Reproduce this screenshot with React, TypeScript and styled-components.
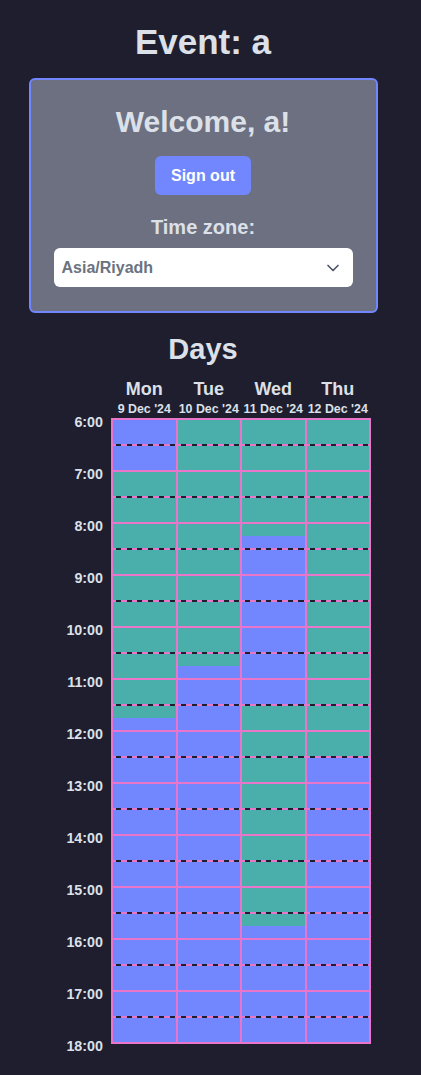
import React from "react";
import styled, {createGlobalStyle} from "styled-components";
import {ChevronDown} from "lucide-react";

const GlobalStyle = createGlobalStyle`
  html, body {
    margin: 0;
    padding: 0;
    background: #1e1e2e;
    overflow: hidden;
  }
  body {
    font-family: "Liberation Sans", Arial, sans-serif;
  }
`

const Page = styled.div`
  width: 406px;
  display: flex;
  flex-direction: column;
  align-items: center;
  padding-top: 22px;
  color: #dce0e8;
`

const Title = styled.h1`
  margin: 0 0 16px;
  font-size: 35px;
  line-height: 40px;
  font-weight: bold;
`

const Card = styled.div`
  width: 349px;
  box-sizing: border-box;
  background: #6c7080;
  border: 2px solid #7287fd;
  border-radius: 6px;
  padding: 24px 23px;
  display: flex;
  flex-direction: column;
  align-items: center;
`

const Welcome = styled.h2`
  margin: 0;
  font-size: 30px;
  line-height: 36px;
  font-weight: bold;
`

const SignOut = styled.button`
  margin-top: 16px;
  background: #7287fd;
  color: #fff;
  border: none;
  border-radius: 6px;
  padding: 10px 16px;
  font-family: inherit;
  font-size: 16px;
  line-height: 19px;
  font-weight: bold;
  cursor: pointer;
`

const TzLabel = styled.label`
  margin-top: 20px;
  font-size: 20px;
  line-height: 24px;
  font-weight: bold;
`

const SelectWrap = styled.div`
  position: relative;
  width: 100%;
  margin-top: 9px;
`

const Select = styled.select`
  appearance: none;
  width: 100%;
  height: 39px;
  border: none;
  border-radius: 6px;
  background: #fff;
  color: #6b7280;
  font-family: inherit;
  font-size: 16px;
  font-weight: bold;
  padding: 0 36px 0 8px;
  outline: none;
`

const Chevron = styled.span`
  position: absolute;
  right: 10px;
  top: 50%;
  transform: translateY(-50%);
  display: flex;
  color: #4b5563;
  pointer-events: none;
`

const DaysTitle = styled.h2`
  margin: 19px 0 0;
  font-size: 29px;
  line-height: 34px;
  font-weight: bold;
`

const Schedule = styled.div`
  margin-top: 13px;
  display: flex;
  align-items: flex-start;
  gap: 8px;
`

const TimeCol = styled.div`
  width: 68px;
  padding-top: 17px;
`

const TimeLabel = styled.div`
  height: 52px;
  line-height: 52px;
  text-align: right;
  font-size: 14.3px;
  font-weight: bold;
`

const DaysArea = styled.div`
  width: 260px;
`

const Header = styled.div`
  display: grid;
  grid-template-columns: repeat(4, 1fr);
  column-gap: 2px;
  padding: 0 2px;
`

const DayHead = styled.div`
  display: flex;
  flex-direction: column;
  align-items: center;
`

const DayName = styled.div`
  font-size: 18px;
  line-height: 20px;
  font-weight: bold;
`

const DayDate = styled.div`
  margin-top: 3px;
  font-size: 12.4px;
  line-height: 14px;
  font-weight: bold;
  white-space: nowrap;
`

const Grid = styled.div`
  margin-top: 2px;
  display: grid;
  grid-template-columns: repeat(4, 1fr);
  column-gap: 2px;
  padding: 2px;
  background: #ea76cb;
`

const Column = styled.div`
  display: flex;
  flex-direction: column;
  gap: 2px;
`

const Hour = styled.div`
  display: flex;
  flex-direction: column;
`

const Half = styled.div`
  display: flex;
  flex-direction: column;
  height: 24px;
`

const Quarter = styled.div<{ $on: boolean }>`
  height: 12px;
  background: ${p => (p.$on ? "#4aafab" : "#7287fd")};
`

const Dash = styled.div`
  height: 2px;
  background: repeating-linear-gradient(
    90deg,
    #ea76cb 0 3px,
    #1e1e2e 3px 8px,
    #ea76cb 8px 10.7px
  );
`

interface Day {
  name: string,
  date: string,
  free: number[][]
}

// free ranges are in quarter hours counted from 6:00, end exclusive
const days: Day[] = [
  {name: "Mon", date: "9 Dec '24", free: [[4, 23]]},
  {name: "Tue", date: "10 Dec '24", free: [[0, 19]]},
  {name: "Wed", date: "11 Dec '24", free: [[0, 9], [22, 39]]},
  {name: "Thu", date: "12 Dec '24", free: [[0, 26]]},
];

const hours = Array.from({length: 12}, (_, i) => 6 + i);
const labels = Array.from({length: 13}, (_, i) => `${6 + i}:00`);

const isFree = (day: Day, q: number) => day.free.some(([a, b]) => q >= a && q < b);

const App = () => {
  return (
    <>
      <GlobalStyle/>
      <Page>
        <Title>Event: a</Title>
        <Card>
          <Welcome>Welcome, a!</Welcome>
          <SignOut>Sign out</SignOut>
          <TzLabel htmlFor="tz">Time zone:</TzLabel>
          <SelectWrap>
            <Select id="tz" defaultValue="Asia/Riyadh">
              <option value="Asia/Riyadh">Asia/Riyadh</option>
            </Select>
            <Chevron><ChevronDown size={20} strokeWidth={2}/></Chevron>
          </SelectWrap>
        </Card>

        <DaysTitle>Days</DaysTitle>
        <Schedule>
          <TimeCol>
            {labels.map(l => <TimeLabel key={l}>{l}</TimeLabel>)}
          </TimeCol>
          <DaysArea>
            <Header>
              {days.map(d => (
                <DayHead key={d.name}>
                  <DayName>{d.name}</DayName>
                  <DayDate>{d.date}</DayDate>
                </DayHead>
              ))}
            </Header>
            <Grid>
              {days.map(d => (
                <Column key={d.name}>
                  {hours.map((h, i) => {
                    const q = i * 4;
                    return (
                      <Hour key={h}>
                        <Half>
                          <Quarter $on={isFree(d, q)}/>
                          <Quarter $on={isFree(d, q + 1)}/>
                        </Half>
                        <Dash/>
                        <Half>
                          <Quarter $on={isFree(d, q + 2)}/>
                          <Quarter $on={isFree(d, q + 3)}/>
                        </Half>
                      </Hour>
                    );
                  })}
                </Column>
              ))}
            </Grid>
          </DaysArea>
        </Schedule>
      </Page>
    </>
  );
};

export default App;
